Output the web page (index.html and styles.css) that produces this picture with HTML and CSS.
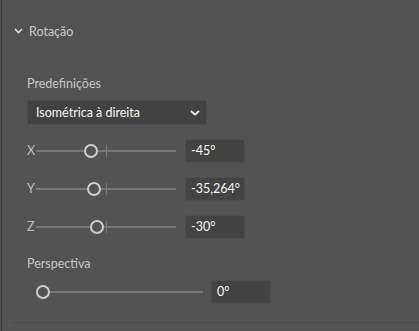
FILE: index.html
```html
<!DOCTYPE html>
<html lang="pt">
<head>
<meta charset="utf-8">
<link rel="stylesheet" href="styles.css">
</head>
<body>
<div class="panel">
  <div class="section-head">
    <svg class="chev" width="9" height="6" viewBox="0 0 9 6"><path d="M1 1 L4.5 4.5 L8 1" fill="none" stroke="#dcdcdc" stroke-width="1.6"/></svg>
    <span class="title">Rotação</span>
  </div>
  <div class="section-body">
    <div class="label preset-label">Predefinições</div>
    <div class="select">
      <span class="select-text">Isométrica à direita</span>
      <svg class="select-chev" width="10" height="6" viewBox="0 0 10 6"><path d="M1 1 L5 4.6 L9 1" fill="none" stroke="#f2f2f2" stroke-width="1.7"/></svg>
    </div>
    <div class="axes">
      <div class="axis-row">
        <span class="axis-label">X</span>
        <div class="track">
          <span class="tick"></span>
          <span class="knob" style="left:48px"></span>
        </div>
        <div class="num">-45°</div>
      </div>
      <div class="axis-row">
        <span class="axis-label">Y</span>
        <div class="track">
          <span class="tick"></span>
          <span class="knob" style="left:51px"></span>
        </div>
        <div class="num">-35,264°</div>
      </div>
      <div class="axis-row">
        <span class="axis-label">Z</span>
        <div class="track">
          <span class="tick"></span>
          <span class="knob" style="left:54px"></span>
        </div>
        <div class="num">-30°</div>
      </div>
    </div>
    <div class="label persp-label">Perspectiva</div>
    <div class="persp-row">
      <div class="track persp-track">
        <span class="knob" style="left:0px"></span>
      </div>
      <div class="num">0°</div>
    </div>
  </div>
  <div class="divider"></div>
</div>
</body>
</html>
```
FILE: styles.css
```css
html, body {
  margin: 0;
  padding: 0;
  background: #535353;
}
body {
  width: 419px;
  height: 331px;
  overflow: hidden;
  font-family: Lato, "Noto Sans", sans-serif;
}
.panel {
  margin-left: 1px;
  border-left: 1px solid #3c3c3c;
  height: 331px;
  box-sizing: border-box;
  display: flex;
  flex-direction: column;
}
.section-head {
  display: flex;
  align-items: center;
  height: 20px;
  margin-top: 21px;
  padding-left: 12px;
  gap: 6px;
}
.chev { display: block; }
.title {
  color: #c9c9c9;
  font-size: 12.5px;
}
.section-body {
  padding-left: 25px;
  display: flex;
  flex-direction: column;
}
.label {
  color: #c6c6c6;
  font-size: 12.5px;
  line-height: 16px;
}
.preset-label { margin-top: 35px; }
.select {
  margin-top: 8px;
  width: 180px;
  height: 25px;
  box-sizing: border-box;
  background: #424242;
  border: 1px solid #4c4c4c;
  border-radius: 2px;
  display: flex;
  align-items: center;
  justify-content: space-between;
  padding: 0 6px 0 8px;
}
.select-text {
  color: #f7f7f7;
  font-size: 12.5px;
}
.select-chev { display: block; }
.axes {
  margin-top: 14px;
  display: flex;
  flex-direction: column;
  gap: 14px;
}
.axis-row, .persp-row {
  display: flex;
  align-items: center;
  height: 24px;
}
.axis-label {
  width: 9px;
  color: #bdbdbd;
  font-size: 12.5px;
  line-height: 16px;
}
.track {
  position: relative;
  width: 140px;
  height: 2px;
  background: #787878;
  margin-right: 9px;
}
.tick {
  position: absolute;
  left: 70px;
  top: -5px;
  width: 1px;
  height: 12px;
  background: #787878;
}
.knob {
  position: absolute;
  top: -6px;
  width: 10px;
  height: 10px;
  border: 2px solid #cdcdcd;
  border-radius: 50%;
  background: #535353;
}
.num {
  width: 60px;
  height: 24px;
  box-sizing: border-box;
  background: #434343;
  border: 1px solid #4e4e4e;
  border-radius: 2px;
  color: #f7f7f7;
  font-size: 12.5px;
  line-height: 22px;
  padding-left: 5px;
}
.persp-label { margin-top: 17px; }
.persp-row { margin-top: 8px; }
.persp-track {
  width: 167px;
  margin-left: 9px;
  margin-right: 8px;
}
.divider {
  margin-top: auto;
  margin-bottom: 8px;
  margin-left: 11px;
  height: 1px;
  background: #494949;
}
```
